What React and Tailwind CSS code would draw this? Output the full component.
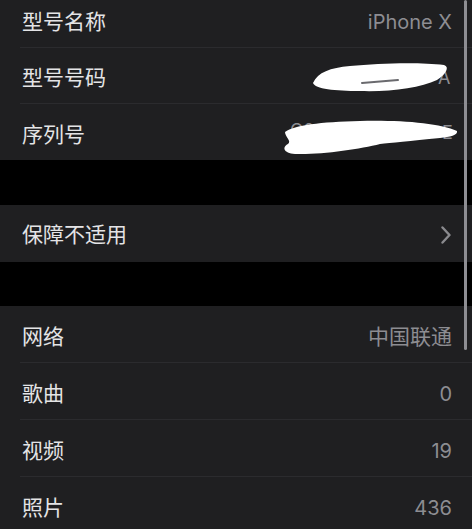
const font = { fontFamily: '"Inter", "Noto Sans CJK SC", sans-serif' }

function Row({ label, value, last, children, h = 'h-[56px]', valueSize = 'text-[20px]' }) {
  return (
    <div className={`bg-[#1f1f21] ${h}`}>
      <div className={`ml-5 h-full flex items-center justify-between pr-5 pt-[5px] ${last ? '' : 'border-b border-[#2b2b2e]'}`}>
        <span className="text-[21px] text-[#e4e4e6] pl-[2px]">{label}</span>
        {children ? children : <span className={`${valueSize} text-[#8d8d92]`}>{value}</span>}
      </div>
    </div>
  )
}

function BlobModel() {
  return (
    <svg width="142" height="34" viewBox="0 0 142 34" className="mt-[-2px]">
      <text x="128" y="24" fontSize="18" fill="#8d8d92" fontFamily="Inter, sans-serif">A</text>
      <path d="M3 23 C8 12 20 8 40 6 C70 3 110 2 134 5 C140 7 136 14 127 20 C110 28 80 32 50 31 C25 31 5 29 3 23 Z" fill="#ffffff" />
      <path d="M52 23 L88 20" stroke="#6a6a6e" strokeWidth="2" strokeLinecap="round" />
    </svg>
  )
}

function BlobSerial() {
  return (
    <svg width="178" height="40" viewBox="0 0 178 40" className="mr-[-6px] mt-[5px]">
      <text x="10" y="20" fontSize="18" fill="#8d8d92" fontFamily="Inter, sans-serif">C0</text>
      <text x="162" y="22" fontSize="18" fill="#8d8d92" fontFamily="Inter, sans-serif">E</text>
      <path d="M5 15 C15 8 40 5 80 4 C120 3 160 6 177 14 C178 18 170 20 160 21 C130 24 110 26 100 27 C80 32 40 38 15 37 C3 36 2 30 8 27 C12 24 5 20 5 15 Z" fill="#ffffff" />
    </svg>
  )
}

export default function App() {
  return (
    <div className="relative w-full h-[529px] overflow-hidden bg-black" style={font}>
      <div className="-mt-[8px]">
        <Row label="型号名称" value="iPhone X" />
        <Row label="型号号码"><BlobModel /></Row>
        <Row label="序列号" last><BlobSerial /></Row>
      </div>

      <div className="h-[45px]" />

      <div className="bg-[#1f1f21] h-[57px] pl-5 pr-5 flex items-center justify-between pt-[3px]">
        <span className="text-[21px] text-[#e4e4e6] pl-[2px]">保障不适用</span>
        <svg width="10" height="18" viewBox="0 0 10 18" className="mr-[1px]">
          <path d="M1.5 1.5 L8.5 9 L1.5 16.5" fill="none" stroke="#8a8a8e" strokeWidth="2.4" strokeLinecap="round" strokeLinejoin="round" />
        </svg>
      </div>

      <div className="h-[44px]" />

      <div>
        <Row label="网络" value="中国联通" h="h-[57px]" valueSize="text-[21px]" />
        <Row label="歌曲" value="0" h="h-[57px]" />
        <Row label="视频" value="19" h="h-[57px]" />
        <Row label="照片" value="436" h="h-[57px]" last />
      </div>

      {/* scroll indicator */}
      <div className="absolute left-[464px] top-0 w-[3px] h-[350px] rounded-full bg-[#8e8e93]" />
    </div>
  )
}
